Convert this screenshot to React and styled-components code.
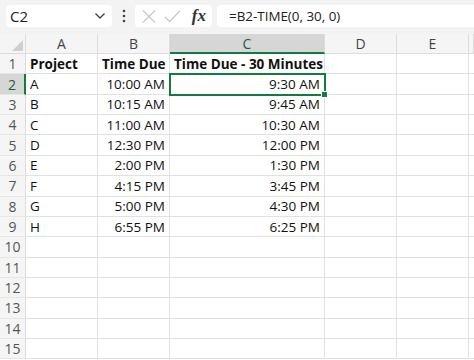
import React from 'react'
import styled, { createGlobalStyle } from 'styled-components'

const Global = createGlobalStyle`
  body {
    margin: 0;
    background: #ffffff;
    font-family: "Open Sans", "Noto Sans", sans-serif;
  }
`;

const Page = styled.div`
  width: 474px;
  height: 360px;
  overflow: hidden;
  background: #ffffff;
`;

const TopBar = styled.div`
  height: 34px;
  box-sizing: border-box;
  padding: 5px 0 7px 6px;
  background: #f3f3f3;
  display: flex;
  align-items: stretch;
`;

const NameBox = styled.div`
  width: 106px;
  box-sizing: border-box;
  background: #ffffff;
  border-radius: 4px;
  display: flex;
  align-items: center;
  justify-content: space-between;
  padding: 0 6px 0 4px;
  font-size: 15px;
  color: #222;
`;

const Dots = styled.div`
  width: 23px;
  display: flex;
  align-items: center;
  justify-content: center;
`;

const FxBox = styled.div`
  width: 77px;
  box-sizing: border-box;
  background: #ffffff;
  border-radius: 4px;
  display: flex;
  align-items: center;
  gap: 8px;
  padding: 0 6px 0 7px;
`;

const Fx = styled.span`
  font-family: "Liberation Serif", serif;
  font-style: italic;
  font-weight: bold;
  font-size: 17px;
  color: #333;
  margin-left: 3px;
`;

const FormulaBox = styled.div`
  flex: 1;
  margin-left: 5px;
  background: #ffffff;
  border-radius: 4px 0 0 4px;
  display: flex;
  align-items: center;
  padding-left: 12px;
  font-size: 13.4px;
  color: #222;
`;

const Grid = styled.div`
  display: grid;
  grid-template-columns: 26px 72px 72px 155px 72px 72px 5px;
  grid-template-rows: 20px repeat(15, 20.36px);
`;

const Cell = styled.div`
  position: relative;
  box-sizing: border-box;
  border-right: 1px solid #e1e1e1;
  border-bottom: 1px solid #e1e1e1;
  padding: 0 4px;
  display: flex;
  align-items: center;
  justify-content: ${p => (p.$right ? 'flex-end' : 'flex-start')};
  font-size: 13.5px;
  font-weight: ${p => (p.$bold ? 700 : 400)};
  color: #111;
  white-space: nowrap;
  ${p => p.$selected && `
    outline: 2px solid #107c41;
    outline-offset: -1px;
    z-index: 1;
  `}
`;

const Handle = styled.span`
  position: absolute;
  right: -4px;
  bottom: -4px;
  width: 5px;
  height: 5px;
  background: #107c41;
  border: 1px solid #ffffff;
`;

const ColHead = styled.div`
  box-sizing: border-box;
  background: ${p => (p.$active ? '#d6d6d6' : '#f5f5f5')};
  border-right: 1px solid #dcdcdc;
  border-bottom: ${p => (p.$active ? '2px solid #107c41' : '1px solid #dcdcdc')};
  display: flex;
  align-items: center;
  justify-content: center;
  font-size: 14px;
  color: ${p => (p.$active ? '#1b5e3a' : '#444')};
`;

const RowHead = styled.div`
  box-sizing: border-box;
  background: ${p => (p.$active ? '#d6d6d6' : '#f5f5f5')};
  border-right: ${p => (p.$active ? '2px solid #107c41' : '1px solid #dcdcdc')};
  border-bottom: 1px solid #e6e6e6;
  display: flex;
  align-items: center;
  justify-content: center;
  font-size: 14px;
  color: ${p => (p.$active ? '#1b5e3a' : '#555')};
`;

const Corner = styled.div`
  box-sizing: border-box;
  background: #f5f5f5;
  border-right: 1px solid #dcdcdc;
  border-bottom: 1px solid #dcdcdc;
  display: flex;
  align-items: flex-end;
  justify-content: flex-end;
  padding: 0 2px 2px 0;
`;

const cols = ['A', 'B', 'C', 'D', 'E', ''];

const data = [
  ['Project', 'Time Due', 'Time Due - 30 Minutes'],
  ['A', '10:00 AM', '9:30 AM'],
  ['B', '10:15 AM', '9:45 AM'],
  ['C', '11:00 AM', '10:30 AM'],
  ['D', '12:30 PM', '12:00 PM'],
  ['E', '2:00 PM', '1:30 PM'],
  ['F', '4:15 PM', '3:45 PM'],
  ['G', '5:00 PM', '4:30 PM'],
  ['H', '6:55 PM', '6:25 PM'],
];

const App = () => {
  const rows = Array.from({ length: 15 }, (_, i) => i + 1);
  return (
    <Page>
      <Global />
      <TopBar>
        <NameBox>
          <span>C2</span>
          <svg width="12" height="8" viewBox="0 0 12 8">
            <path d="M1.5 1.5 L6 6 L10.5 1.5" fill="none" stroke="#444" strokeWidth="1.4" />
          </svg>
        </NameBox>
        <Dots>
          <svg width="4" height="14" viewBox="0 0 4 14">
            <circle cx="2" cy="2" r="1.3" fill="#444" />
            <circle cx="2" cy="7" r="1.3" fill="#444" />
            <circle cx="2" cy="12" r="1.3" fill="#444" />
          </svg>
        </Dots>
        <FxBox>
          <svg width="15" height="15" viewBox="0 0 15 15">
            <path d="M1 1 L14 14 M14 1 L1 14" stroke="#c2c2c2" strokeWidth="1.2" />
          </svg>
          <svg width="18" height="15" viewBox="0 0 18 15">
            <path d="M1 8 L6 13 L17 1.5" fill="none" stroke="#c2c2c2" strokeWidth="1.2" />
          </svg>
          <Fx>fx</Fx>
        </FxBox>
        <FormulaBox>=B2-TIME(0, 30, 0)</FormulaBox>
      </TopBar>
      <Grid>
        <Corner>
          <svg width="11" height="11" viewBox="0 0 11 11">
            <path d="M11 0 L11 11 L0 11 Z" fill="#cfcfcf" />
          </svg>
        </Corner>
        {cols.map((c, i) => (
          <ColHead key={i} $active={c === 'C'}>{c}</ColHead>
        ))}
        {rows.map(r => {
          const d = data[r - 1] || ['', '', ''];
          return (
            <React.Fragment key={r}>
              <RowHead $active={r === 2}>{r}</RowHead>
              <Cell $bold={r === 1}>{d[0]}</Cell>
              <Cell $bold={r === 1} $right={r !== 1}>{d[1]}</Cell>
              <Cell $bold={r === 1} $right={r !== 1} $selected={r === 2}>
                {d[2]}
                {r === 2 && <Handle />}
              </Cell>
              <Cell />
              <Cell />
              <Cell />
            </React.Fragment>
          );
        })}
      </Grid>
    </Page>
  );
};

export default App
